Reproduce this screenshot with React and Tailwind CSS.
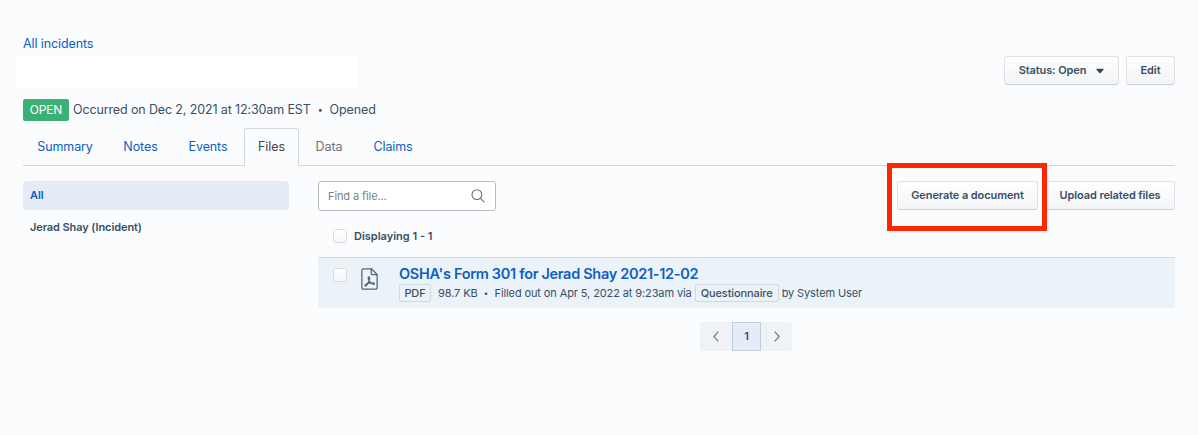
import clsx from 'clsx'

const tabs = [
  { label: 'Summary', width: 'w-[85px] pr-px' },
  { label: 'Notes', width: 'w-[64px] pr-px' },
  { label: 'Events', width: 'w-[69px] pr-px' },
  { label: 'Files', width: 'w-[55px]' },
  { label: 'Data', width: 'w-[58px]', muted: true },
  { label: 'Claims', width: 'w-[69px] pr-px' },
]

function Button({ className, children }) {
  return (
    <button
      className={clsx(
        'flex h-[29px] items-center justify-center whitespace-nowrap rounded-[3px] border border-[#dfe2e6] border-b-[#cdd0d4] bg-linear-to-b from-white to-[#f3f4f6] text-[11px] font-semibold tracking-[-0.1px] text-[#384f66]',
        className
      )}
    >
      {children}
    </button>
  )
}

function Checkbox() {
  return <span className="block size-[14px] shrink-0 rounded-[3px] border border-[#d9dce0] bg-linear-to-b from-white to-[#f5f6f7]" />
}

function Tag({ className, children }) {
  return (
    <span
      className={clsx(
        'flex h-[18px] items-center justify-center whitespace-nowrap rounded-[2px] border border-[#cfd8e1] font-medium',
        className
      )}
    >
      {children}
    </span>
  )
}

function PdfIcon() {
  return (
    <svg width="17" height="22" viewBox="0 0 17.6 22.8" fill="none" stroke="#526579" strokeWidth="1.3" strokeLinejoin="round" strokeLinecap="round">
      <path d="M2.5.8h8.300l5.900 5.900v13.700a1.600 1.600 0 0 1-1.600 1.600H2.500a1.600 1.600 0 0 1-1.600-1.600V2.400A1.600 1.600 0 0 1 2.500.8Z" />
      <path d="M10.600.9v4.500a1.500 1.500 0 0 0 1.500 1.500h4.500" />
      <path d="M8.200 9.300c-.9.100-.9 1.400-.4 2.700.8 2.200 2.700 4.300 4.500 4.800 1.200.3 1.800-.1 1.700-.7-.2-.8-2.100-.9-4.200-.6-2.300.3-4.800 1.200-5.500 2.100-.4.600 0 1.200.6 1 1.400-.5 3.400-4.300 3.900-7 .2-1.500.1-2.300-.6-2.300Z" />
    </svg>
  )
}

export default function App() {
  return (
    <div className="relative h-[435px] w-[1198px] overflow-hidden bg-[#fbfcfe] font-['Inter',sans-serif] text-[#384f66]">
      {/* Header */}
      <header className="flex h-[128px] justify-between pr-[23px] pt-9">
        <div className="flex flex-col pl-4">
          <a className="ml-[7px] h-5 text-[12.5px] leading-[16px] tracking-[-0.1px] text-[#0b60c4]">All incidents</a>
          <div className="h-8 w-[342px] bg-white" />
          <div className="ml-[7px] mt-[11px] flex h-[22px] items-center whitespace-nowrap text-[12.5px] tracking-[-0.13px]">
            <span className="mr-1 flex h-[22px] w-[46px] items-center justify-center rounded-[2px] bg-[#3caf77] text-[12px] text-white">OPEN</span>
            <span>Occurred on Dec 2, 2021 at 12:30am EST</span>
            <span className="w-[19px] text-center text-[9px]">•</span>
            <span>Opened</span>
          </div>
        </div>
        <div className="flex gap-[7px] pt-5">
          <Button className="w-[115px]">
            Status: Open
            <svg className="ml-[10px]" width="8" height="6" viewBox="0 0 8 6" fill="#33475b">
              <path d="M1 .8h6c.6 0 .8.600.5 1L4.600 5c-.3.400-.9.400-1.200 0L.5 1.800C.2 1.400.4.8 1 .8Z" />
            </svg>
          </Button>
          <Button className="w-[49px]">Edit</Button>
        </div>
      </header>

      {/* Tabs */}
      <nav className="mx-[23px] flex h-[38px] border-b border-[#d3d6da] text-[12.5px] tracking-[-0.1px] text-[#0b60c4]">
        {tabs.map((tab) => (
          <a
            key={tab.label}
            className={clsx(
              'mr-px flex h-[38px] items-center justify-center',
              tab.width,
              tab.label === 'Files' && 'rounded-t-[3px] border border-b-0 border-[#d3d6da] bg-[#fbfcfe] text-[#444]',
              tab.muted && 'text-[#6c6f73]'
            )}
          >
            {tab.label}
          </a>
        ))}
      </nav>

      <div className="flex gap-[29px] px-[23px] pt-[15px]">
        {/* File owners */}
        <aside className="w-[266px] shrink-0 text-[11px] font-semibold tracking-[-0.09px]">
          <div className="flex h-[29px] items-center rounded-[3px] bg-[#e5ecf7] px-[7px] text-[#0b60c4]">All</div>
          <div className="mt-[3px] flex h-[29px] items-center px-[7px]">Jerad Shay (Incident)</div>
        </aside>

        <main className="flex-1">
          <div className="flex justify-between">
            <div className="flex h-[30px] w-[178px] items-center justify-between rounded-[3px] border border-[#babdc1] bg-white pl-[9px] pr-[10px] text-[11px] tracking-[-0.1px] text-[#7b7f84]">
              Find a file...
              <svg width="14" height="14" viewBox="0 0 14 14" fill="none" stroke="#5f7081" strokeWidth="1.1" strokeLinecap="round">
                <circle cx="5.9" cy="5.7" r="4.9" />
                <path d="m9.500 9.300 3.600 3.500" />
              </svg>
            </div>
            <div className="flex gap-[7px]">
              <Button className="w-[141px]">Generate a document</Button>
              <Button className="w-[130px]">Upload related files</Button>
            </div>
          </div>

          <div className="flex h-[46px] items-center gap-[7px] pl-[15px] pt-[4px] text-[11px] font-semibold">
            <Checkbox />
            <span>Displaying 1 - 1</span>
          </div>

          <div className="flex h-[51px] border-t border-[#c9def2] bg-[#ebf3f9] pl-[15px]">
            <div className="mr-[14px] pt-[10px]">
              <Checkbox />
            </div>
            <div className="w-[38px] pt-[10px]">
              <PdfIcon />
            </div>
            <div className="pt-[6px]">
              <a className="block h-5 whitespace-nowrap text-[14.5px] font-semibold leading-5 tracking-[-0.31px] text-[#0b60c4]">
                OSHA's Form 301 for Jerad Shay 2021-12-02
              </a>
              <div className="flex h-[18px] items-center whitespace-nowrap text-[11px] tracking-[-0.11px]">
                <Tag className="w-8">PDF</Tag>
                <span className="ml-[7px]">98.7 KB</span>
                <span className="w-[17px] text-center text-[8px]">•</span>
                <span className="mr-[3px]">Filled out on Apr 5, 2022 at 9:23am via</span>
                <Tag className="w-[84px]">Questionnaire</Tag>
                <span className="ml-[3px]">by System User</span>
              </div>
            </div>
          </div>

          {/* Pagination */}
          <div className="ml-[382px] mt-[14px] flex h-[29px] w-[92px] overflow-hidden rounded-[3px] bg-[#f0f3f5] text-[11px] font-semibold">
            <div className="flex w-8 items-center justify-center">
              <svg width="6" height="11" viewBox="0 0 6 11" fill="none" stroke="#6b7b8a" strokeWidth="1.2">
                <path d="M5.300.7.800 5.500l4.500 4.800" />
              </svg>
            </div>
            <div className="flex w-[29px] items-center justify-center border border-[#bfcfdf] bg-[#e5ecf7]">1</div>
            <div className="flex w-[31px] items-center justify-center">
              <svg width="6" height="11" viewBox="0 0 6 11" fill="none" stroke="#6b7b8a" strokeWidth="1.2">
                <path d="m.7.7 4.500 4.800L.7 10.300" />
              </svg>
            </div>
          </div>
        </main>
      </div>

      {/* Highlight over the generate button */}
      <div className="pointer-events-none absolute left-[887px] top-[163px] h-[68px] w-[160px] border-[5px] border-[#ff2600]" />
    </div>
  )
}
